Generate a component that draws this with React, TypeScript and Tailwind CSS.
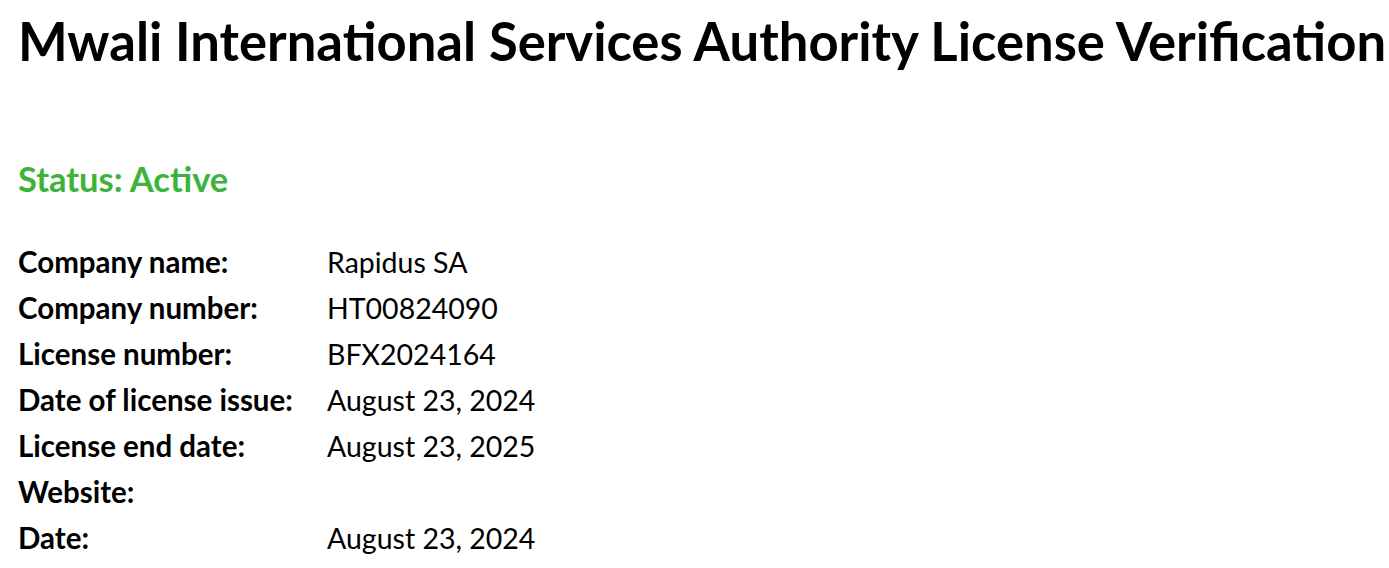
const ROWS: [string, string][] = [
  ["Company name:", "Rapidus SA"],
  ["Company number:", "HT00824090"],
  ["License number:", "BFX2024164"],
  ["Date of license issue:", "August 23, 2024"],
  ["License end date:", "August 23, 2025"],
  ["Website:", ""],
  ["Date:", "August 23, 2024"],
];

export default function App() {
  return (
    <div className="min-h-screen bg-white pl-[18px] pt-[15px] text-black" style={{ fontFamily: "Lato, 'Noto Sans', sans-serif" }}>
      <h1 className="whitespace-nowrap text-[52.6px] font-bold leading-none">
        Mwali International Services Authority License Verification
      </h1>

      <h2 className="mt-[94px] text-[34.5px] font-bold leading-none text-[#3cb43c]">Status: Active</h2>

      <div className="mt-[52px] grid grid-cols-[309px_1fr] gap-y-[18px] leading-[28px]">
        {ROWS.map(([label, value]) => (
          <div key={label} className="contents">
            <span className="text-[29.5px] font-bold">{label}</span>
            <span className="text-[28.5px]">{value}</span>
          </div>
        ))}
      </div>
    </div>
  );
}
